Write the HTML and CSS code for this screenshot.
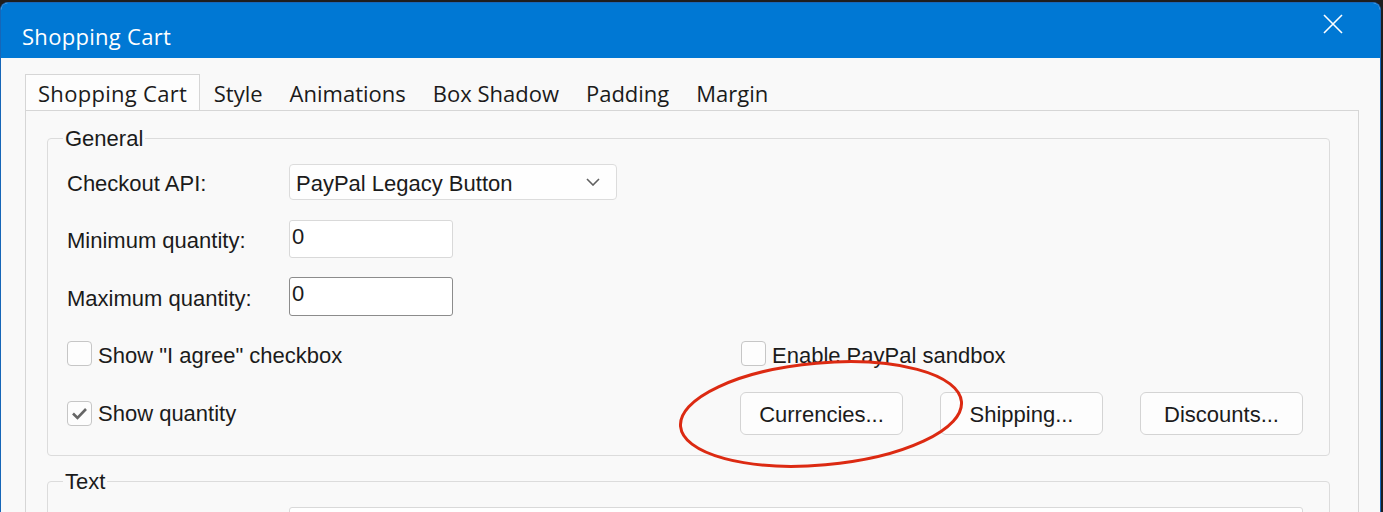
FILE: index.html
```html
<!DOCTYPE html>
<html>
<head>
<meta charset="utf-8">
<link rel="stylesheet" href="styles.css">
</head>
<body>
<div class="window">
  <div class="titlebar">
    <span class="title">Shopping Cart</span>
    <svg class="close" width="20" height="20" viewBox="0 0 20 20"><path d="M1 1 L19 19 M19 1 L1 19" stroke="#fff" stroke-width="1.6" fill="none"/></svg>
  </div>
  <div class="client">
    <div class="tabs">
      <div class="tab active">Shopping Cart</div>
      <div class="tab">Style</div>
      <div class="tab">Animations</div>
      <div class="tab">Box Shadow</div>
      <div class="tab">Padding</div>
      <div class="tab">Margin</div>
    </div>
    <div class="panel">
      <fieldset class="group general">
        <legend>General</legend>
        <div class="row r1">
          <span class="lbl">Checkout API:</span>
          <div class="select"><span class="seltext">PayPal Legacy Button</span>
            <svg width="14" height="8" viewBox="0 0 14 8"><path d="M1 1 L7 7 L13 1" stroke="#606060" stroke-width="1.6" fill="none"/></svg>
          </div>
        </div>
        <div class="row r2">
          <span class="lbl">Minimum quantity:</span>
          <div class="input">0</div>
        </div>
        <div class="row r3">
          <span class="lbl">Maximum quantity:</span>
          <div class="input focus">0</div>
        </div>
        <div class="row r4">
          <div class="cell1 c4"><span class="cb"></span><span class="cbl">Show "I agree" checkbox</span></div>
          <div class="cell2"><span class="cb"></span><span class="cbl">Enable PayPal sandbox</span></div>
        </div>
        <div class="row r5">
          <div class="cell1"><span class="cb checked"><svg width="19" height="19" viewBox="0 0 19 19"><path d="M3 9.5 L7.5 14 L16 5" stroke="#666" stroke-width="2.6" fill="none"/></svg></span><span class="cbl q">Show quantity</span></div>
          <div class="buttons">
            <div class="btn">Currencies...</div>
            <div class="btn">Shipping...</div>
            <div class="btn">Discounts...</div>
          </div>
        </div>
      </fieldset>
      <fieldset class="group textgroup">
        <legend>Text</legend>
        <div class="row">
          <span class="lbl"></span>
          <div class="input wide"></div>
        </div>
      </fieldset>
    </div>
  </div>
</div>
<svg class="annot" width="1383" height="512" viewBox="0 0 1383 512"><ellipse cx="821" cy="414" rx="141" ry="51" transform="rotate(-5 821 414)" fill="none" stroke="#dc2a12" stroke-width="3"/></svg>
</body>
</html>
```

FILE: styles.css
```css
html, body {
  margin: 0;
  padding: 0;
}
body {
  background: #1e1e1e;
  width: 1383px;
  height: 512px;
  overflow: hidden;
  position: relative;
  font-family: "Liberation Sans", Arial, sans-serif;
  color: #1b1b1b;
}
.window {
  margin-top: 2px;
  width: 1381px;
  height: 510px;
  box-sizing: border-box;
  border: 1px solid #1666b8;
  border-bottom: 0;
  border-radius: 8px 8px 0 0;
  overflow: hidden;
  background: #f9f9f9;
  display: flex;
  flex-direction: column;
}
.titlebar {
  height: 55px;
  flex: none;
  background: #0078d4;
  display: flex;
  align-items: flex-start;
  justify-content: space-between;
  padding-left: 21px;
}
.title {
  font: 22px/30px "Open Sans", sans-serif;
  letter-spacing: 0.3px;
  color: #fff;
  margin-top: 18px;
}
.close {
  margin-top: 11px;
  margin-right: 37px;
}
.client {
  flex: 1;
  display: flex;
  flex-direction: column;
  padding: 16px 21px 0 24px;
}
.tabs {
  display: flex;
  height: 36px;
  flex: none;
}
.tab {
  font: 22px/30px "Open Sans", sans-serif;
  color: #1b1b1b;
  padding: 3px 12.5px 2px;
  border: 1px solid transparent;
  border-bottom: 0;
}
.tab.active {
  padding: 3px 12px 3px;
  letter-spacing: 0.3px;
  background: #fdfdfd;
  border-color: #d6d6d6;
  position: relative;
  z-index: 1;
  height: 36px;
  box-sizing: border-box;
}
.panel {
  flex: 1;
  border: 1px solid #d6d6d6;
  border-bottom: 0;
  background: #f9f9f9;
  padding: 0 28px 0 21px;
}
.group {
  margin: 0;
  border: 1px solid #dcdcdc;
  border-radius: 4px;
  padding: 13px 19px 20px;
  min-width: 0;
}
.general {
  margin-top: 15px;
}
.textgroup {
  margin-top: 13px;
}
legend {
  font-size: 22px;
  line-height: 25px;
  padding: 0 2px;
  margin-left: -4px;
}
.row {
  display: flex;
  align-items: center;
}
.lbl {
  width: 222px;
  flex: none;
  font-size: 22px;
  padding-top: 4px;
}
.select {
  width: 328px;
  height: 36px;
  box-sizing: border-box;
  border: 1px solid #dcdcdc;
  border-radius: 4px;
  background: #fefefe;
  display: flex;
  align-items: center;
  justify-content: space-between;
  padding: 0 16px 0 6px;
  font-size: 22px;
}
.seltext {
  padding-top: 3px;
}
.input {
  width: 164px;
  height: 38px;
  box-sizing: border-box;
  border: 1px solid #d9d9d9;
  border-radius: 3px;
  background: #fff;
  font-size: 22px;
  line-height: 32px;
  padding-left: 2px;
}
.input.focus {
  height: 39px;
  border-color: #8c8c8c;
}
.input.wide {
  width: 1014px;
}
.r2 { margin-top: 20px; }
.r3 { margin-top: 19px; }
.r4 { margin-top: 25px; height: 25px; }
.r5 { margin-top: 26px; height: 43px; }
.cell1 {
  width: 673px;
  flex: none;
  display: flex;
  align-items: center;
}
.cell1.c4 {
  width: 674px;
}
.cell2 {
  display: flex;
  align-items: center;
}
.cb {
  width: 25px;
  height: 25px;
  box-sizing: border-box;
  border: 1px solid #c6c6c6;
  border-radius: 4px;
  background: #fdfdfd;
  display: flex;
  align-items: center;
  justify-content: center;
  flex: none;
}
.cbl {
  margin-left: 6px;
  font-size: 22px;
  padding-top: 4px;
}
.cbl.q {
  padding-top: 0;
}
.buttons {
  display: flex;
  gap: 37px;
}
.btn {
  width: 163px;
  height: 43px;
  box-sizing: border-box;
  border: 1px solid #d4d4d4;
  border-radius: 6px;
  background: #fdfdfd;
  font-size: 22px;
  padding-top: 3px;
  display: flex;
  align-items: center;
  justify-content: center;
}
.annot {
  position: absolute;
  left: 0;
  top: 0;
  pointer-events: none;
}
```
